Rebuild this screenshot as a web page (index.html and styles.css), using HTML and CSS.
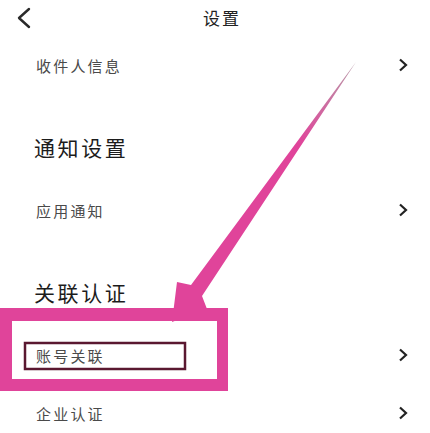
FILE: index.html
```html
<!DOCTYPE html>
<html lang="zh">
<head>
<meta charset="utf-8">
<link rel="stylesheet" href="styles.css">
</head>
<body>
<div class="page">
  <header class="topbar">
    <svg class="back" width="16" height="22" viewBox="0 0 16 22"><path d="M13 2 L3 11 L13 20" fill="none" stroke="#2a2a2a" stroke-width="2.4" stroke-linecap="round" stroke-linejoin="round"/></svg>
    <div class="title">设置</div>
  </header>
  <div class="row"><span class="label">收件人信息</span><svg class="chev" width="10" height="14" viewBox="0 0 10 14"><path d="M2 1.5 L8 7 L2 12.5" fill="none" stroke="#222" stroke-width="2.2"/></svg></div>
  <div class="section">通知设置</div>
  <div class="row"><span class="label">应用通知</span><svg class="chev" width="10" height="14" viewBox="0 0 10 14"><path d="M2 1.5 L8 7 L2 12.5" fill="none" stroke="#222" stroke-width="2.2"/></svg></div>
  <div class="section">关联认证</div>
  <div class="row"><span class="label">账号关联</span><svg class="chev" width="10" height="14" viewBox="0 0 10 14"><path d="M2 1.5 L8 7 L2 12.5" fill="none" stroke="#222" stroke-width="2.2"/></svg></div>
  <div class="row"><span class="label">企业认证</span><svg class="chev" width="10" height="14" viewBox="0 0 10 14"><path d="M2 1.5 L8 7 L2 12.5" fill="none" stroke="#222" stroke-width="2.2"/></svg></div>

  <svg class="annot" width="430" height="433" viewBox="0 0 430 433">
    <defs>
      <linearGradient id="tail" x1="356" y1="62" x2="300" y2="145" gradientUnits="userSpaceOnUse">
        <stop offset="0" stop-color="#b89aa8"/>
        <stop offset="1" stop-color="#e0449a"/>
      </linearGradient>
    </defs>
    <polygon points="356,62 202,296 207,309 172,322 177,282 191,285" fill="url(#tail)"/>
    <path d="M0 308 H228 V391 H0 Z M12 321 V379 H217 V321 Z" fill="#e0449a" fill-rule="evenodd"/>
    <rect x="25" y="343" width="160" height="26" fill="none" stroke="#5a1830" stroke-width="2.5"/>
  </svg>
</div>
</body>
</html>
```
FILE: styles.css
```css
html, body {
  margin: 0;
  padding: 0;
  background: #ffffff;
}
.page {
  position: relative;
  width: 430px;
  height: 433px;
  overflow: hidden;
  font-family: "Noto Sans CJK SC", "Noto Sans", sans-serif;
  background: #ffffff;
}
.topbar {
  position: relative;
  height: 36px;
  display: flex;
  align-items: center;
  justify-content: center;
}
.back {
  position: absolute;
  left: 16px;
  top: 7px;
}
.title {
  font-size: 17px;
  letter-spacing: 2px;
  color: #222;
  margin-left: 14px;
  line-height: 36px;
}
.row {
  height: 58px;
  display: flex;
  align-items: center;
  justify-content: space-between;
  padding: 0 22px 0 36px;
}
.label {
  font-size: 15px;
  letter-spacing: 2.2px;
  color: #4a4a4a;
}
.chev {
  display: block;
}
.section {
  padding: 37px 0 18px 34px;
  line-height: 32px;
  font-size: 21px;
  letter-spacing: 2.6px;
  color: #1c1c1c;
}
.annot {
  position: absolute;
  left: 0;
  top: 0;
  pointer-events: none;
}
```
